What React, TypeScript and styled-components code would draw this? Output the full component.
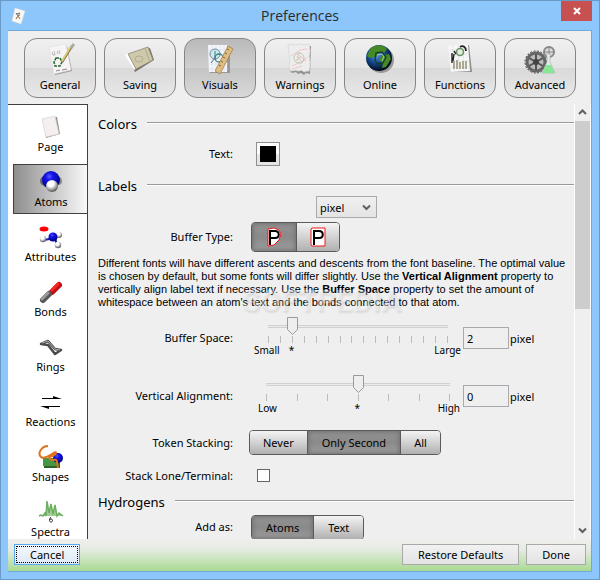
import React, { useState } from "react";
import styled, { createGlobalStyle, css } from "styled-components";

const GlobalStyle = createGlobalStyle`
  * { box-sizing: border-box; }
  body { margin: 0; font-family: "Noto Sans", "Open Sans", sans-serif; font-size: 11px; color: #000; }
  button, input, select { font: inherit; color: inherit; margin: 0; }
`;

/* ---------- window ---------- */

const Window = styled.div`
  height: 100vh;
  display: flex;
  flex-direction: column;
  padding: 0 7px 7px;
  border: 1px solid #6a9bc8;
  background: #8cc6fa;
  overflow: hidden;
`;

const TitleBar = styled.header`
  flex: none;
  height: 29px;
  display: grid;
  grid-template-columns: 32px 1fr 32px;
  align-items: start;
`;

const AppIcon = styled.svg`
  margin: 6px 0 0 2px;
`;

const Title = styled.h1`
  margin: 0;
  font: 400 14px/29px "Open Sans", sans-serif;
  color: #2b2b2b;
  text-align: center;
`;

const CloseButton = styled.button`
  justify-self: end;
  width: 31px;
  height: 20px;
  padding: 0;
  border: 0;
  background: #c75050;
  display: grid;
  place-items: center;
`;

const Frame = styled.div`
  flex: 1;
  min-height: 0;
  display: flex;
  flex-direction: column;
  background: #efefef;
  border: 1px solid #70a9dc;
  border-width: 1px 1px 1px 0;
`;

const Toolbar = styled.nav`
  flex: none;
  display: flex;
  gap: 8px;
  padding: 7px 8px 6px 16px;
`;

const ToolButton = styled.button<{ $active?: boolean }>`
  flex: 0 1 72px;
  height: 60px;
  padding: 3px 0 0;
  display: flex;
  flex-direction: column;
  align-items: center;
  gap: 1px;
  line-height: 16px;
  border: 1px solid #858585;
  border-radius: 13px;
  background: ${(p) =>
    p.$active
      ? "linear-gradient(#b9b9b9, #cfcfcf 50%, #c4c4c4 50%, #d9d9d9)"
      : "linear-gradient(#f0f0f0, #e4e4e4 50%, #d9d9d9 50%, #e8e8e8)"};
`;

const Main = styled.div`
  flex: 1;
  min-height: 0;
  display: flex;
`;

/* ---------- side tabs ---------- */

const SideTabs = styled.nav`
  flex: none;
  width: 80px;
  display: flex;
  flex-direction: column;
  gap: 5px;
  padding-top: 4px;
  background: #fff;
  border-top: 1px solid #404040;
  border-right: 1px solid #404040;
  overflow: hidden;
`;

const SideTab = styled.button<{ $active?: boolean }>`
  flex: none;
  height: 50px;
  margin-left: 5px;
  padding: 4px 0 0;
  display: flex;
  flex-direction: column;
  align-items: center;
  line-height: 13px;
  border: 1px solid transparent;
  border-right: 0;
  background: none;
  font-size: 11px;
  svg { flex: none; }
  ${(p) =>
    p.$active &&
    css`
      width: 75px;
      border-color: #404040;
      background: linear-gradient(90deg, #8e8e8e, #fafafa);
    `}
`;

/* ---------- settings ---------- */

const Content = styled.main`
  flex: 1;
  min-width: 0;
  position: relative;
  padding: 9px 0 0 10px;
  overflow: hidden;
  border-right: 1px solid #fff;
`;

const SectionTitle = styled.h2`
  margin: 0;
  padding-top: 2px;
  display: flex;
  align-items: center;
  gap: 10px;
  font-size: 13px;
  font-weight: 400;
  line-height: 18px;
  &::after {
    content: "";
    flex: 1;
    height: 2px;
    margin-bottom: 2px;
    background: linear-gradient(#999 50%, #fff 50%);
  }
`;

const Row = styled.div<{ $height: number }>`
  display: grid;
  grid-template-columns: 135px 1fr;
  column-gap: 16px;
  align-items: center;
  height: ${(p) => p.$height}px;
`;

const Label = styled.label`
  text-align: right;
  line-height: 16px;
`;

const Inset = styled.div<{ $left: number }>`
  display: flex;
  align-items: center;
  padding-left: ${(p) => p.$left}px;
`;

const Swatch = styled.button`
  width: 24px;
  height: 24px;
  padding: 3px;
  border: 1px solid #8f8f8f;
  background: linear-gradient(#fdfdfd 50%, #e5e5e5 50%);
  &::before {
    content: "";
    display: block;
    height: 16px;
    background: #000;
  }
`;

const SelectBox = styled.div`
  width: 61px;
  height: 22px;
  display: grid;
  align-items: center;
  border: 1px solid #a9a9af;
  background: linear-gradient(#f0f0f0, #e4e4e4);
  > * { grid-area: 1 / 1; }
  svg { justify-self: end; margin-right: 5px; pointer-events: none; }
`;

const Select = styled.select`
  appearance: none;
  width: 100%;
  height: 20px;
  padding: 0 3px;
  border: 0;
  background: none;
`;

const Segments = styled.div<{ $tall?: boolean }>`
  justify-self: start;
  display: inline-flex;
  height: ${(p) => (p.$tall ? 30 : 25)}px;
  border: 1px solid #5a5a5a;
  border-radius: 4px;
  overflow: hidden;
`;

const Segment = styled.button<{ $active?: boolean; $pad?: number }>`
  display: grid;
  place-items: center;
  padding: 0 ${(p) => p.$pad ?? 14}px;
  border: 0;
  & + & { border-left: 1px solid #5a5a5a; }
  background: ${(p) =>
    p.$active ? "linear-gradient(#939393, #8a8a8a 50%, #9c9c9c)" : "linear-gradient(#f4f4f4, #b0b0b0)"};
  ${(p) => p.$active && "box-shadow: inset 0 0 4px 1px #707070;"}
`;

const Note = styled.p`
  margin: 2px 0 8px;
  font-family: "Liberation Sans", sans-serif;
  font-size: 11px;
  line-height: 13px;
  white-space: nowrap;
`;

const SliderRow = styled.div<{ $height: number }>`
  display: grid;
  grid-template-columns: 135px 212px auto;
  column-gap: 16px;
  align-items: start;
  height: ${(p) => p.$height}px;
`;

const SliderLabel = styled(Label)`
  padding-top: 13px;
`;

const SliderBox = styled.div<{ $wide?: boolean }>`
  display: flex;
  flex-direction: column;
  padding: 0 ${(p) => (p.$wide ? "6px 0 12px" : "8px 0 14px")};
`;

const thumb =
  "url(\"data:image/svg+xml,%3Csvg xmlns='http://www.w3.org/2000/svg' width='11' height='18'%3E%3Cpath d='M.5.5h10v12l-5 5-5-5z' fill='%23eeeeee' stroke='%23999'/%3E%3C/svg%3E\")";

const Range = styled.input`
  appearance: none;
  width: 100%;
  height: 18px;
  background: linear-gradient(#d0d0d0 1px, #eaeaea 1px, #eaeaea 2px, #d0d0d0 2px) center 8px / calc(100% - 10px) 3px
    no-repeat;
  &::-webkit-slider-thumb {
    appearance: none;
    width: 11px;
    height: 18px;
    background: ${thumb};
  }
`;

const Ticks = styled.div`
  display: flex;
  justify-content: space-between;
  padding: 1px 5px 0;
  i { width: 1px; height: 7px; background: #bcbcbc; }
`;

const Scale = styled.div<{ $wide?: boolean }>`
  display: flex;
  justify-content: ${(p) => (p.$wide ? "space-between" : "flex-start")};
  gap: ${(p) => (p.$wide ? 0 : 9)}px;
  margin: 0 ${(p) => (p.$wide ? "-5px 0 -3px" : "-8px 0 -9px")};
  font-size: 10px;
  line-height: 14px;
  span:last-child { margin-left: ${(p) => (p.$wide ? "0" : "auto")}; }
`;

const Amount = styled.label`
  display: flex;
  align-items: center;
  gap: 1px;
  margin: 10px 0 0 -14px;
  input {
    width: 46px;
    height: 22px;
    padding: 0 3px;
    border: 1px solid #a9a9af;
    border-radius: 0;
    background: #efefef;
  }
`;

const Check = styled.input`
  appearance: none;
  width: 13px;
  height: 13px;
  border: 1px solid #666;
  background: #fff;
`;

const Watermark = styled.span`
  position: absolute;
  top: 181px;
  left: 154px;
  font: 700 30px/32px "Roboto", sans-serif;
  color: rgba(255, 255, 255, 0.35);
  text-shadow: 1px 2px 2px rgba(0, 0, 0, 0.09);
  pointer-events: none;
`;

const ScrollBar = styled.div`
  flex: none;
  width: 16px;
  display: flex;
  flex-direction: column;
  align-items: center;
  border-right: 1px solid #fff;
`;

const ScrollArrow = styled.button`
  flex: none;
  width: 15px;
  height: 17px;
  padding: 0;
  border: 0;
  background: none;
  display: grid;
  place-items: center;
`;

const ScrollTrack = styled.div`
  flex: 1;
  align-self: stretch;
  &::before { content: ""; display: block; height: 47%; background: #cdcdcd; }
`;

const Footer = styled.footer`
  flex: none;
  height: 32px;
  display: flex;
  gap: 7px;
  padding: 5px 5px 6px 6px;
  background: linear-gradient(#efefef, #e4ebe0 35%, #a7da91);
`;

const FooterButton = styled.button<{ $focused?: boolean }>`
  height: 21px;
  padding: 0 15px;
  line-height: 17px;
  border: 1px solid #a9a9a9;
  background: linear-gradient(#f2f2f2, #e3e3e3);
  ${(p) =>
    p.$focused &&
    css`
      margin-right: auto;
      border-color: #5ba7ed;
      outline: 1px dotted #000;
      outline-offset: -3px;
      background: linear-gradient(#f2f7fc, #dfeaf5);
    `}
`;

/* ---------- icons ---------- */

const GeneralIcon = () => (
  <svg width="32" height="34" viewBox="0 0 32 34">
    <path d="M7 6 23 4l5 25-17 4z" fill="#999" />
    <path d="M5 5 22 2l5 26-17 4z" fill="#f8f3f5" stroke="#ddd" strokeWidth=".5" />
    <path d="m8 10 1 3 2 0-1-4m3 0 1 3m1-4 1 4" fill="none" stroke="#aaa" strokeWidth=".8" />
    <path d="m12 16 4 0 2 4-2 4-5 0-1-4z" fill="none" stroke="#286b34" strokeWidth="1.6" strokeDasharray="3 1" />
    <path d="m12 29 4-1m2 0 5-1" stroke="#888" />
    <path d="M28 4 18 20" stroke="#8b7f56" strokeWidth="2.5" /><path d="M27 4 18 19" stroke="#dfd27a" strokeWidth="1.5" />
    <path d="m26 5 3-4 2 2-3 4z" fill="#aaa" />
  </svg>
);
const SavingIcon = () => (
  <svg width="32" height="34" viewBox="0 0 32 34">
    <path d="m3 14 23-8 4 12-19 12z" fill="#77736b" />
    <path d="m1 13 3-2 8 16-2 1z" fill="#fff" />
    <path d="m4 12 20-7 5 13-17 9z" fill="#cfc9ac" stroke="#8d8770" strokeWidth=".8" />
    <path d="m21 6 5 14" stroke="#b0aa8c" /><ellipse cx="15" cy="17" rx="4" ry="3" fill="none" stroke="#b3ad90" />
  </svg>
);
const VisualsIcon = () => (
  <svg width="32" height="34" viewBox="0 0 32 34">
    <path d="M6 5h20v26H6z" fill="#999" />
    <path d="M4 3h19v27H5z" fill="#f4f6fa" />
    <path d="M8 3v27M12 3v27M16 3v27M20 3v27M4 8h20M4 12h20M4 17h20M4 22h20M4 27h20" stroke="#d7ddec" strokeWidth=".7" />
    <circle cx="11" cy="12" r="5" fill="#c9eded" stroke="#718999" />
    <circle cx="15" cy="16" r="4" fill="none" stroke="#388377" strokeWidth="1.3" />
    <path d="M11 9v7l-4 5" fill="none" stroke="#48708a" />
    <path d="m24 4 5 3-13 25-5-3z" fill="#ddbd83" stroke="#a1763f" strokeWidth=".7" />
    <path d="m23 7 2 1m-4 3 2 1m-4 3 2 1m-4 3 2 1m-4 3 2 1" stroke="#80602f" />
  </svg>
);
const WarningsIcon = () => (
  <svg width="32" height="34" viewBox="0 0 32 34">
    <path d="m7 5 20-1-1 28-4-1-2 2-3-2-3 1-2-2-4 1-2-2z" fill="#929292" />
    <path d="m4 3 4-1 3 1 5-1 4 1 5-1 1 7-1 5 1 6-1 9-3 0-2 1-2-2-4 1-2-1-5 1-2-4 1-8-1-4z" fill="#eeeded" stroke="#dcdcdc" />
    <path d="m7 14 9-6 7-1M8 24l13-6m-5-8-4 9m1-7 9 7m-5 3 6-7M8 27l10-3" fill="none" stroke="#efbcbf" strokeWidth=".8" />
    <circle cx="15" cy="16" r="5" fill="none" stroke="#b7ccb2" /><path d="m13 14 4 5m-4 0 4-5" stroke="#ccbcbc" strokeWidth=".8" />
  </svg>
);
const OnlineIcon = () => (
  <svg width="32" height="34" viewBox="0 0 32 34">
    <defs><radialGradient id="sea" cx=".4" cy=".35" r=".65"><stop stopColor="#649be2" /><stop offset=".5" stopColor="#164d95" /><stop offset="1" stopColor="#020818" /></radialGradient></defs>
    <circle cx="17" cy="18" r="13" fill="#999" /><circle cx="15" cy="16" r="13" fill="url(#sea)" />
    <path d="M6 7c5-5 13-5 17 0l-3 4-5-1-2 4-7 2-3-2zM17 14l8-2 2 5-5 8-4 1 1-5-4-3z" fill="#468a25" />
    <path d="m12 11 6-1 4 5-3 6-6 1-2-4z" fill="none" stroke="#153d27" strokeWidth="1.3" />
    <path d="m13 13 5-1 2 3-2 4" fill="none" stroke="#a5c9ac" />
  </svg>
);
const FunctionsIcon = () => (
  <svg width="32" height="34" viewBox="0 0 32 34">
    <path d="m7 5 18-2 3 27H8z" fill="#909090" /><path d="m4 4 20-2 2 27-19 1z" fill="#f7f7f7" />
    <path d="m6 8 18-1M6 13l18-1M7 19h18M7 25h18M9 4l1 25m4-26 1 26m4-26 1 26" stroke="#ddd" strokeWidth=".7" />
    <path d="M8 11v10M10 12l-1 7M12 12l-2-3" fill="none" stroke="#222" strokeWidth="1.4" />
    <path d="M16 5c3-2 6 0 6 4" fill="none" stroke="#222" strokeWidth="1.8" />
    <circle cx="16" cy="10" r="3.5" fill="#e5efe0" stroke="#6a9163" strokeWidth="1.6" />
    <path d="M10 27v-8m3 8v-9m3 9v-7m3 7v-8m3 8v-8" stroke="#aaa792" strokeWidth="2" />
  </svg>
);
const AdvancedIcon = () => (
  <svg width="34" height="34" viewBox="0 0 34 34">
    <circle cx="13" cy="20" r="9" fill="#bbb" stroke="#666" strokeWidth="3" /><circle cx="13" cy="20" r="11" fill="none" stroke="#444" strokeDasharray="2 1.5" />
    <path d="M13 12v16M6 16l14 8M6 24l14-8" stroke="#555" strokeWidth="2" /><circle cx="13" cy="20" r="3" fill="#444" />
    <circle cx="26" cy="10" r="5" fill="#ddd" stroke="#888" strokeWidth="2" /><path d="M26 4v12M20 10h12" stroke="#888" />
    <path d="M23 12h5l-1 2v6l5 11H19l5-11v-6z" fill="#e0eeee" stroke="#aaa" strokeWidth=".6" /><path d="m23 23-4 8h13l-4-8z" fill="#86e896" />
  </svg>
);

const PageIcon = () => (
  <svg width="26" height="26" viewBox="0 0 26 26"><path d="m6 5 13-2 3 17-14 4z" fill="#8a8a8a" /><path d="m4 5 13-3 4 18-13 3z" fill="#f6efef" stroke="#d4d4d4" strokeWidth=".7" /></svg>
);
const AtomsIcon = () => (
  <svg width="26" height="26" viewBox="0 0 26 26">
    <defs>
      <radialGradient id="nucleus" cx=".4" cy=".3" r=".7"><stop stopColor="#5c5cff" /><stop offset=".3" stopColor="#1414ee" /><stop offset="1" stopColor="#00007c" /></radialGradient>
      <radialGradient id="hydrogen" cx=".4" cy=".3" r=".7"><stop offset=".35" stopColor="#fff" /><stop offset="1" stopColor="#555" /></radialGradient>
    </defs>
    <circle cx="7" cy="12" r="5" fill="#666" /><circle cx="20" cy="12" r="4" fill="#888" />
    <circle cx="13" cy="11" r="9" fill="url(#nucleus)" /><circle cx="14" cy="17" r="6" fill="url(#hydrogen)" />
  </svg>
);
const AttributesIcon = () => (
  <svg width="26" height="26" viewBox="0 0 26 26">
    <path d="m6 16 11-2 2 7" fill="none" stroke="#1122aa" strokeWidth="2" />
    <circle cx="21" cy="11" r="3" fill="url(#hydrogen)" /><circle cx="5" cy="15" r="3.2" fill="url(#hydrogen)" />
    <circle cx="20" cy="21" r="3.2" fill="url(#hydrogen)" /><circle cx="15" cy="13" r="4.5" fill="url(#nucleus)" /><ellipse cx="6" cy="5" rx="4.5" ry="2.5" fill="#f00" />
  </svg>
);
const BondsIcon = () => (
  <svg width="26" height="26" viewBox="0 0 26 26" strokeWidth="6" strokeLinecap="round">
    <path d="m21 6-7 7" stroke="#b81416" /><path d="m5 21 6-6" stroke="#555" />
    <g strokeWidth="3"><path d="m20 5-6 6" stroke="#f22" /><path d="m4 20 6-6" stroke="#999" /></g>
  </svg>
);
const RingsIcon = () => (
  <svg width="26" height="26" viewBox="0 0 26 26" fill="none" strokeLinejoin="round">
    <path d="m3 10 7-3 7 8 6 1-6 4-7-9z" stroke="#4a4a4a" strokeWidth="2.5" /><path d="m4 9 6-2 7 8 5 1" stroke="#aaa" />
  </svg>
);
const ReactionsIcon = () => (
  <svg width="26" height="26" viewBox="0 0 26 26"><path d="M4 10h20l-9-3v2H4zM22 17H2l9 3v-2h11z" /></svg>
);
const ShapesIcon = () => (
  <svg width="26" height="26" viewBox="0 0 26 26">
    <path d="M6 15h16v9H6z" fill="#2c632a" /><path d="M5 14h15v8H5z" fill="#469642" /><circle cx="20" cy="14" r="5" fill="url(#nucleus)" />
    <path d="M10 2C4 2-1 9 3 13s16-8 15-4-9 3-6 6 6-2 7 3l1 6" fill="none" stroke="#df741c" strokeWidth="2" />
  </svg>
);
const SpectraIcon = () => (
  <svg width="26" height="26" viewBox="0 0 26 26">
    <path d="m1 17 2-1 2 1 2-3 1 3 1-15 2 12 2-9 2 10 2-9 2 11 2-3 4 3" fill="#a3cc96" stroke="#6daf60" strokeWidth="1.5" />
    <path d="M13 18c-2 2-2 5 0 5s2-3 0-3-1 1-1 1" fill="none" stroke="#222" />
  </svg>
);

const Chevron = ({ up }: { up?: boolean }) => (
  <svg width="9" height="7" viewBox="0 0 9 7" fill="none" stroke="#606060" strokeWidth="2">
    <path d={up ? "m1 5 3.5-3.5L8 5" : "m1 1.5 3.5 3.5L8 1.5"} />
  </svg>
);

const BufferShape = ({ boxed }: { boxed?: boolean }) => (
  <svg width="18" height="22" viewBox="0 0 18 22" fill="none">
    <path d={boxed ? "M2 3 3 2h13v18H3l-1-1z" : "m3 3 6-1 5 2 2 4-2 6-5 5-6 1z"} fill="#fff" stroke="#f01818" />
    <path d="M5 19V5h5c5 0 5 7 0 7H5" stroke="#000" strokeWidth="2" />
  </svg>
);

/* ---------- page ---------- */

const tools = [
  ["General", GeneralIcon], ["Saving", SavingIcon], ["Visuals", VisualsIcon], ["Warnings", WarningsIcon],
  ["Online", OnlineIcon], ["Functions", FunctionsIcon], ["Advanced", AdvancedIcon],
] as const;

const tabs = [
  ["Page", PageIcon], ["Atoms", AtomsIcon], ["Attributes", AttributesIcon], ["Bonds", BondsIcon],
  ["Rings", RingsIcon], ["Reactions", ReactionsIcon], ["Shapes", ShapesIcon], ["Spectra", SpectraIcon],
] as const;

type SliderProps = { id: string; label: string; low: string; high: string; max: number; initial: number; min: number; wide?: boolean };

function SliderSetting({ id, label, low, high, min, max, initial, wide }: SliderProps) {
  const [value, setValue] = useState(initial);
  return (
    <SliderRow $height={wide ? 50 : 58}>
      <SliderLabel htmlFor={id}>{label}</SliderLabel>
      <SliderBox $wide={wide}>
        <Range id={id} type="range" min={min} max={max} value={value} onChange={(e) => setValue(+e.target.value)} />
        <Ticks>{Array.from({ length: max - min + 1 }, (_, i) => <i key={i} />)}</Ticks>
        <Scale $wide={wide}><span>{low}</span><span>*</span><span>{high}</span></Scale>
      </SliderBox>
      <Amount>
        <input type="text" aria-label={`${label} pixel`} value={value} onChange={(e) => setValue(Number(e.target.value) || 0)} />
        pixel
      </Amount>
    </SliderRow>
  );
}

export default function App() {
  return (
    <>
      <GlobalStyle />
      <Window>
        <TitleBar>
          <AppIcon width="16" height="18" viewBox="0 0 16 18">
            <path d="m5 1 10 3-4 13-9-3z" fill="#faf7f5" stroke="#ddd" strokeWidth=".5" />
            <path d="m6 6 4 6m0-6-4 6m0-5 4-1" fill="none" stroke="#777" /><path d="m6 11 4-3" stroke="#d88b4b" />
          </AppIcon>
          <Title>Preferences</Title>
          <CloseButton aria-label="Close">
            <svg width="8" height="8" viewBox="0 0 8 8" stroke="#fff" strokeWidth="2"><path d="m1 1 6 6m0-6-6 6" /></svg>
          </CloseButton>
        </TitleBar>
        <Frame>
          <Toolbar>
            {tools.map(([name, Icon]) => (
              <ToolButton key={name} $active={name === "Visuals"}><Icon />{name}</ToolButton>
            ))}
          </Toolbar>
          <Main>
            <SideTabs>
              {tabs.map(([name, Icon]) => (
                <SideTab key={name} $active={name === "Atoms"}><Icon />{name}</SideTab>
              ))}
            </SideTabs>
            <Content>
              <SectionTitle>Colors</SectionTitle>
              <Row $height={42}>
                <Label htmlFor="text-color">Text:</Label>
                <Inset $left={7}><Swatch id="text-color" aria-label="Text color" /></Inset>
              </Row>
              <SectionTitle>Labels</SectionTitle>
              <Row $height={24}>
                <span />
                <Inset $left={67}>
                  <SelectBox>
                    <Select aria-label="Unit"><option>pixel</option></Select>
                    <Chevron />
                  </SelectBox>
                </Inset>
              </Row>
              <Row $height={36}>
                <Label as="span">Buffer Type:</Label>
                <Inset $left={2}>
                  <Segments $tall role="group" aria-label="Buffer Type">
                    <Segment $active $pad={13} aria-label="Outline"><BufferShape /></Segment>
                    <Segment $pad={12} aria-label="Box"><BufferShape boxed /></Segment>
                  </Segments>
                </Inset>
              </Row>
              <Note>
                Different fonts will have different ascents and descents from the font baseline. The optimal value<br />
                is chosen by default, but some fonts will differ slightly. Use the <b>Vertical Alignment</b> property to<br />
                vertically align label text if necessary. Use the <b>Buffer Space</b> property to set the amount of<br />
                whitespace between an atom's text and the bonds connected to that atom.
              </Note>
              <Watermark aria-hidden="true">SOFTPEDIA</Watermark>
              <SliderSetting id="space" label="Buffer Space:" low="Small" high="Large" min={0} max={15} initial={2} />
              <SliderSetting id="align" label="Vertical Alignment:" low="Low" high="High" min={-3} max={3} initial={0} wide />
              <Row $height={35}>
                <Label as="span">Token Stacking:</Label>
                <Segments role="group" aria-label="Token Stacking">
                  <Segment $pad={13}>Never</Segment><Segment $active>Only Second</Segment><Segment $pad={13}>All</Segment>
                </Segments>
              </Row>
              <Row $height={31}>
                <Label htmlFor="stack">Stack Lone/Terminal:</Label>
                <Inset $left={8}><Check id="stack" type="checkbox" /></Inset>
              </Row>
              <SectionTitle>Hydrogens</SectionTitle>
              <Row $height={32}>
                <Label as="span">Add as:</Label>
                <Inset $left={2}>
                  <Segments role="group" aria-label="Add as"><Segment $active>Atoms</Segment><Segment>Text</Segment></Segments>
                </Inset>
              </Row>
            </Content>
            <ScrollBar>
              <ScrollArrow aria-label="Scroll up"><Chevron up /></ScrollArrow>
              <ScrollTrack />
              <ScrollArrow aria-label="Scroll down"><Chevron /></ScrollArrow>
            </ScrollBar>
          </Main>
          <Footer>
            <FooterButton $focused>Cancel</FooterButton>
            <FooterButton>Restore Defaults</FooterButton>
            <FooterButton>Done</FooterButton>
          </Footer>
        </Frame>
      </Window>
    </>
  );
}
